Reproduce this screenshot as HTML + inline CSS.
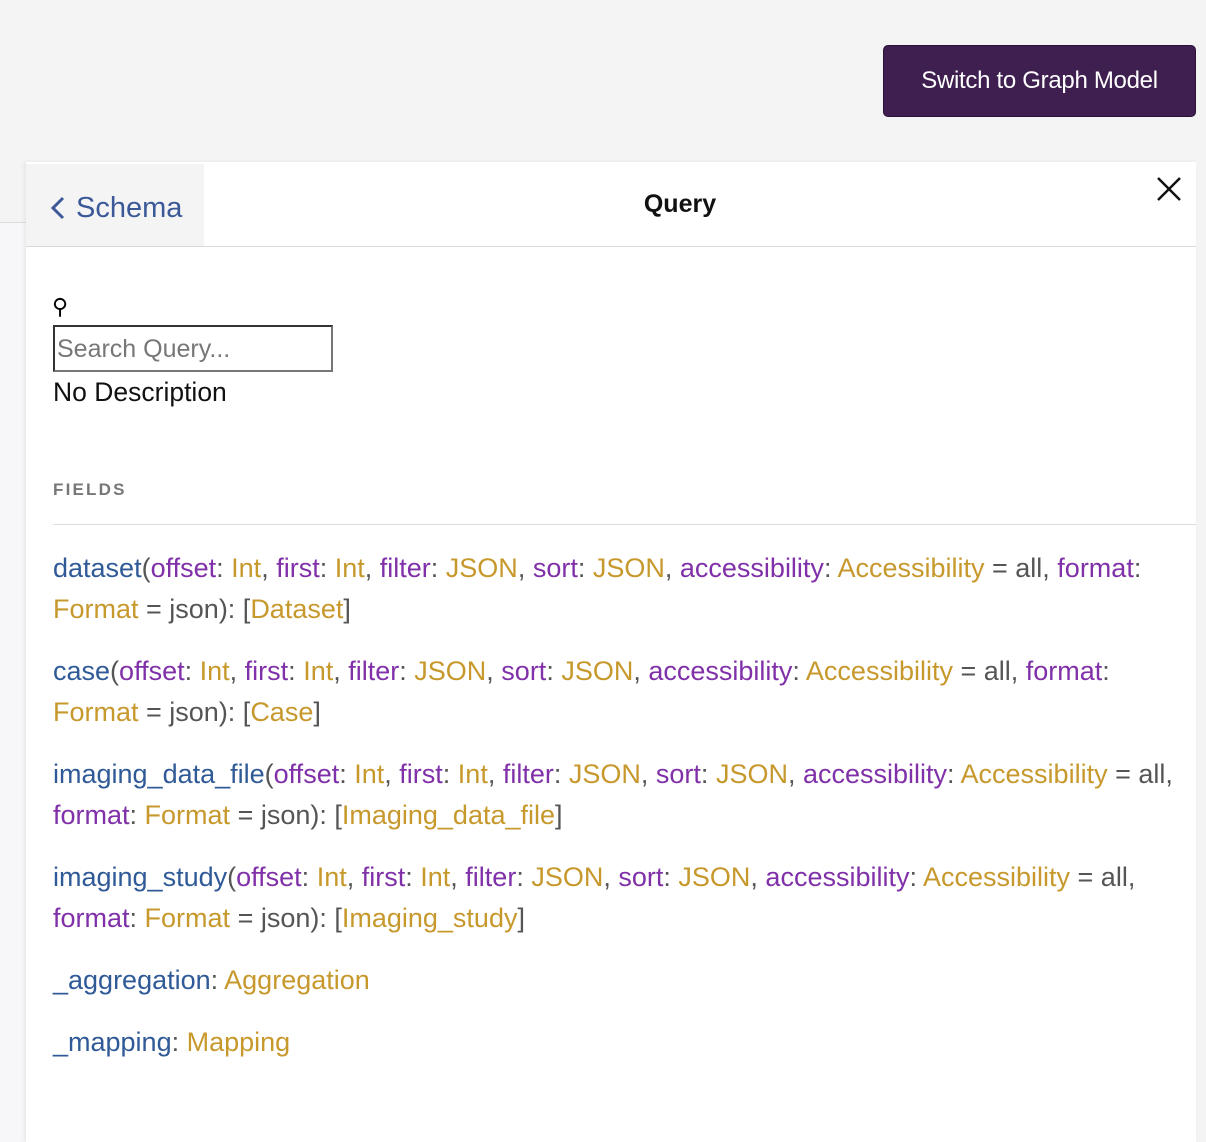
<!DOCTYPE html>
<html><head><meta charset="utf-8"><style>
*{margin:0;padding:0;box-sizing:border-box}
body{width:1206px;height:1128px;background:#f4f4f4;font-family:"Liberation Sans",Helvetica,Arial,sans-serif;position:relative;overflow:hidden}
.btn{position:absolute;left:883px;top:45px;width:313px;height:72px;background:#3f1f4f;border-radius:5px;border:1px solid #2a1236;color:#fff;font-size:24px;display:flex;align-items:center;justify-content:center;letter-spacing:-0.3px}
.strip{position:absolute;left:0;top:222px;width:26px;height:920px;background:#f7f7f9;border-top:1px solid #dcdcdc}
.panel{position:absolute;left:26px;top:162px;width:1170px;height:980px;background:#fff;box-shadow:-2px 0 4px rgba(0,0,0,0.06)}
.back{position:absolute;left:0;top:2px;width:178px;height:82px;background:#f4f4f4;color:#3b5998;font-size:29px;display:flex;align-items:center;padding-left:24px;padding-top:6px}
.back svg{margin-right:10px}
.title{position:absolute;left:554px;width:200px;top:28px;text-align:center;font-size:25px;font-weight:bold;color:#111}
.close{position:absolute;left:1130px;top:14px}
.hr1{position:absolute;left:0;right:0;top:84px;height:1px;background:#d9d9d9}
.pin{position:absolute;left:26px;top:132px;font-size:22px}
.search{position:absolute;left:27px;top:163px;width:280px;height:47px;border:2px solid #333;border-right-color:#777;border-bottom-color:#777;font-size:25px;color:#777;padding:7px 2px;line-height:30px}
.nodesc{position:absolute;left:27px;top:215px;font-size:26.5px;color:#111}
.fields{position:absolute;left:27px;top:318px;font-size:17px;font-weight:bold;letter-spacing:2.2px;color:#777}
.hr2{position:absolute;left:27px;right:0;top:362px;height:1px;background:#dcdcdc}
.list{position:absolute;left:27px;top:386px;font-size:27px;line-height:41px;color:#555;white-space:nowrap}
.f{margin-bottom:21px}
.n{color:#2f5a97}.a{color:#8030a8}.t{color:#c7982c}
</style></head><body>
<div class="btn">Switch to Graph Model</div>
<div class="strip"></div>
<div class="panel">
<div class="back"><svg width="16" height="26" viewBox="0 0 16 26"><path d="M13 3 L3 13 L13 23" fill="none" stroke="#3b5998" stroke-width="3"/></svg>Schema</div>
<div class="title">Query</div>
<svg class="close" width="26" height="26" viewBox="0 0 26 26"><path d="M2 2 L24 24 M24 2 L2 24" stroke="#111" stroke-width="2.5"/></svg>
<div class="hr1"></div>
<div class="pin">⚲</div>
<div class="search">Search Query...</div>
<div class="nodesc">No Description</div>
<div class="fields">FIELDS</div>
<div class="hr2"></div>
<div class="list">
<div class="f"><span class="n">dataset</span>(<span class="a">offset</span>: <span class="t">Int</span>, <span class="a">first</span>: <span class="t">Int</span>, <span class="a">filter</span>: <span class="t">JSON</span>, <span class="a">sort</span>: <span class="t">JSON</span>, <span class="a">accessibility</span>: <span class="t">Accessibility</span> = all, <span class="a">format</span>:<br><span class="t">Format</span> = json): [<span class="t">Dataset</span>]</div>
<div class="f"><span class="n">case</span>(<span class="a">offset</span>: <span class="t">Int</span>, <span class="a">first</span>: <span class="t">Int</span>, <span class="a">filter</span>: <span class="t">JSON</span>, <span class="a">sort</span>: <span class="t">JSON</span>, <span class="a">accessibility</span>: <span class="t">Accessibility</span> = all, <span class="a">format</span>:<br><span class="t">Format</span> = json): [<span class="t">Case</span>]</div>
<div class="f"><span class="n">imaging_data_file</span>(<span class="a">offset</span>: <span class="t">Int</span>, <span class="a">first</span>: <span class="t">Int</span>, <span class="a">filter</span>: <span class="t">JSON</span>, <span class="a">sort</span>: <span class="t">JSON</span>, <span class="a">accessibility</span>: <span class="t">Accessibility</span> = all,<br><span class="a">format</span>: <span class="t">Format</span> = json): [<span class="t">Imaging_data_file</span>]</div>
<div class="f"><span class="n">imaging_study</span>(<span class="a">offset</span>: <span class="t">Int</span>, <span class="a">first</span>: <span class="t">Int</span>, <span class="a">filter</span>: <span class="t">JSON</span>, <span class="a">sort</span>: <span class="t">JSON</span>, <span class="a">accessibility</span>: <span class="t">Accessibility</span> = all,<br><span class="a">format</span>: <span class="t">Format</span> = json): [<span class="t">Imaging_study</span>]</div>
<div class="f"><span class="n">_aggregation</span>: <span class="t">Aggregation</span></div>
<div class="f"><span class="n">_mapping</span>: <span class="t">Mapping</span></div>
</div>
</div>
</body></html>
